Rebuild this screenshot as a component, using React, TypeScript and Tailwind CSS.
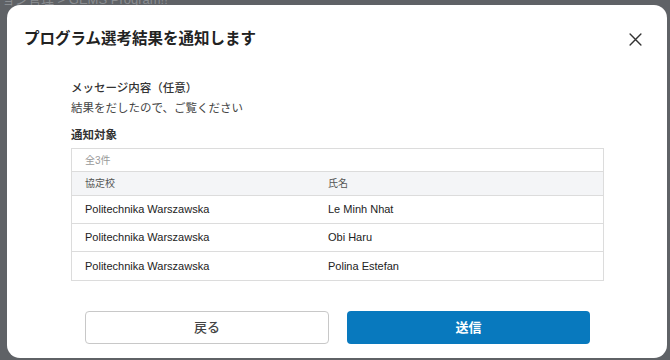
import React from "react";

const rows = [
  { school: "Politechnika Warszawska", name: "Le Minh Nhat" },
  { school: "Politechnika Warszawska", name: "Obi Haru" },
  { school: "Politechnika Warszawska", name: "Polina Estefan" },
];

const font = { fontFamily: '"Liberation Sans", "Noto Sans CJK JP", sans-serif' };

export default function App() {
  return (
    <div className="relative h-[360px] w-[670px] overflow-hidden bg-[#5f6266]" style={font}>
      {/* dimmed page behind */}
      <div className="flex h-full flex-col text-[#8a8d91]">
        <div className="mt-[-8px] pl-[2px] text-[13px] leading-[16px]">ョン管理 &gt; GEMS Program!!</div>
      </div>

      {/* modal */}
      <div className="absolute left-[7px] top-[5px] flex h-[353px] w-[660px] flex-col rounded-[13px] bg-white">
        <div className="flex items-center justify-between pl-[17px] pr-[25px] pt-[25px]">
          <h2 className="text-[15.5px] font-bold leading-[18px] text-[#222]">プログラム選考結果を通知します</h2>
          <svg width="13" height="13" viewBox="0 0 12 12" className="text-[#333]">
            <path d="M1 1L11 11M11 1L1 11" stroke="currentColor" strokeWidth="1.3" strokeLinecap="round" />
          </svg>
        </div>

        <div className="flex flex-col pl-[64px] pr-[63px] pt-[32px]">
          <div className="text-[11.5px] font-medium leading-[16px] text-[#333]">メッセージ内容（任意）</div>
          <div className="mt-[4px] text-[11.5px] leading-[16px] text-[#444]">結果をだしたので、ご覧ください</div>
          <div className="mt-[11px] text-[11.5px] font-bold leading-[16px] text-[#333]">通知対象</div>

          <div className="mt-[5px] border border-[#dcdcdc] text-[#222]">
            <div className="flex h-[23px] items-center border-b border-[#dcdcdc] pl-[13px] text-[10px] text-[#999]">全3件</div>
            <div className="grid h-[24px] grid-cols-[243px_1fr] items-center border-b border-[#dcdcdc] bg-[#f4f5f7] text-[10px] text-[#555]">
              <div className="pl-[13px]">協定校</div>
              <div className="pl-[13px]">氏名</div>
            </div>
            {rows.map((r, i) => (
              <div
                key={i}
                className={`grid h-[28px] grid-cols-[243px_1fr] items-center text-[11px] ${i < rows.length - 1 ? "border-b border-[#dcdcdc]" : ""}`}
              >
                <div className="pl-[13px]">{r.school}</div>
                <div className="pl-[13px]">{r.name}</div>
              </div>
            ))}
          </div>
        </div>

        <div className="mt-[30px] flex gap-[18px] pl-[78px]">
          <button className="flex h-[33px] w-[244px] items-center justify-center rounded-[4px] border border-[#c8c8c8] bg-white text-[13px] font-medium text-[#444]">
            戻る
          </button>
          <button className="flex h-[33px] w-[243px] items-center justify-center rounded-[4px] bg-[#0879be] text-[13px] font-bold text-white">
            送信
          </button>
        </div>
      </div>
    </div>
  );
}
